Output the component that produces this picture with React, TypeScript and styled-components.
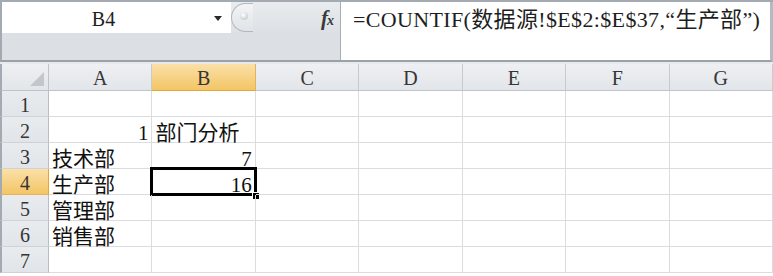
import styled, { createGlobalStyle } from "styled-components";

const GlobalStyle = createGlobalStyle`
  html, body {
    margin: 0;
    padding: 0;
    background: #ffffff;
  }
  body {
    width: 773px;
    height: 276px;
    overflow: hidden;
  }
`;

const Window = styled.div`
  width: 773px;
  height: 276px;
  overflow: hidden;
  box-sizing: border-box;
  border-top: 2px solid #a4aab1;
  background: #ffffff;
`;

const FormulaBar = styled.div`
  display: grid;
  grid-template-columns: 229px 109px 1fr;
  grid-template-rows: 31px 27px;
  border-left: 2px solid #a4aab1;
  border-right: 3px solid #b4bac1;
  border-bottom: 2px solid #9ba1a9;
`;

const NameBox = styled.div`
  grid-row: 1;
  grid-column: 1;
  display: flex;
  align-items: center;
  background: #ffffff;
`;

const NameText = styled.div`
  flex: 1;
  text-align: center;
  font-family: "Liberation Serif", serif;
  font-size: 20px;
  color: #1e1e1e;
  padding-top: 3px;
`;

const DropArrow = styled.div`
  width: 26px;
  display: flex;
  justify-content: center;
  padding-top: 2px;

  &::after {
    content: "";
    border-left: 4px solid transparent;
    border-right: 4px solid transparent;
    border-top: 5px solid #2a2a2a;
  }
`;

const Splitter = styled.div`
  grid-row: 1;
  grid-column: 2;
  display: flex;
  align-items: center;
  justify-content: space-between;
  background: linear-gradient(#e9ecef, #dde0e4);
`;

const Pill = styled.div`
  width: 22px;
  height: 29px;
  box-sizing: border-box;
  border: 1px solid #b3b8bf;
  border-right: none;
  border-radius: 15px 0 0 15px;
  background: linear-gradient(#f2f4f6, #e0e3e7);
  display: flex;
  align-items: center;
  padding-left: 8px;
`;

const Grip = styled.div`
  width: 8px;
  height: 8px;
  border-radius: 50%;
  background: radial-gradient(circle at 40% 35%, #ffffff, #b7bcc2);
  margin-top: -4px;
`;

const Fx = styled.div`
  font-family: "Liberation Serif", serif;
  font-style: italic;
  font-weight: bold;
  font-size: 21px;
  letter-spacing: -1px;
  color: #3a3a3a;
  padding-right: 7px;
  padding-top: 1px;

  & span {
    font-size: 14px;
  }
`;

const BarFill = styled.div`
  grid-row: 2;
  grid-column: 1 / span 2;
  background: #dcdfe3;
`;

const FormulaField = styled.div`
  grid-row: 1 / span 2;
  grid-column: 3;
  background: #ffffff;
  border-left: 1px solid #a8aeb5;
  padding: 6px 0 0 12px;
  font-family: "Liberation Serif", "Noto Sans CJK SC", serif;
  font-size: 22px;
  line-height: 24px;
  letter-spacing: 0.35px;
  color: #1e1e1e;
  white-space: nowrap;
`;

const Gap = styled.div`
  height: 2px;
  background: #e8ebee;
`;

const Sheet = styled.div`
  display: grid;
  grid-template-columns: 49px repeat(7, 103.43px);
  grid-template-rows: 27px;
  grid-auto-rows: 26px;
`;

const Corner = styled.div`
  box-sizing: border-box;
  background: linear-gradient(#eef0f3, #e2e5e9);
  border-left: 2px solid #a4aab1;
  border-right: 1px solid #bfc4ca;
  border-bottom: 1px solid #bfc4ca;
  display: flex;
  align-items: flex-end;
  justify-content: flex-end;
  padding: 0 4px 4px 0;
`;

const ColHead = styled.div<{ $active?: boolean }>`
  box-sizing: border-box;
  display: flex;
  align-items: center;
  justify-content: center;
  font-family: "Liberation Serif", serif;
  font-size: 20px;
  color: #353535;
  padding-top: 2px;
  background: ${(p) =>
    p.$active
      ? "linear-gradient(#fbe0a8, #f3c565)"
      : "linear-gradient(#eef0f3, #e2e5e9)"};
  border-right: 1px solid ${(p) => (p.$active ? "#e4b25a" : "#c6cbd1")};
  border-bottom: 1px solid ${(p) => (p.$active ? "#e3a53c" : "#bfc4ca")};
`;

const RowHead = styled.div<{ $active?: boolean }>`
  box-sizing: border-box;
  display: flex;
  align-items: center;
  justify-content: center;
  font-family: "Liberation Serif", serif;
  font-size: 20px;
  color: #353535;
  padding-top: 3px;
  background: ${(p) =>
    p.$active
      ? "linear-gradient(#fbe0a8, #f3c565)"
      : "linear-gradient(#e9ecef, #e1e4e8)"};
  border-left: 2px solid #a4aab1;
  border-right: 1px solid ${(p) => (p.$active ? "#e3a53c" : "#b9bec5")};
  border-bottom: 1px solid ${(p) => (p.$active ? "#e4b25a" : "#cfd3d8")};
`;

const Cell = styled.div<{ $align?: "left" | "right" }>`
  position: relative;
  box-sizing: border-box;
  display: flex;
  align-items: flex-end;
  justify-content: ${(p) => (p.$align === "right" ? "flex-end" : "flex-start")};
  padding: 0 3px 0 3px;
  border-right: 1px solid #dadcdf;
  border-bottom: 1px solid #dadcdf;
  font-family: "Liberation Serif", "Noto Sans CJK SC", serif;
  font-size: 21px;
  line-height: 18px;
  color: #111111;
  white-space: nowrap;
`;

const Selection = styled.div`
  position: absolute;
  top: -2px;
  left: -2px;
  right: -2px;
  bottom: -2px;
  border: 3px solid #000000;
  pointer-events: none;
`;

const FillHandle = styled.div`
  position: absolute;
  right: -4px;
  bottom: -5px;
  width: 6px;
  height: 6px;
  background: #000000;
  border-left: 1px solid #ffffff;
  border-top: 1px solid #ffffff;
`;

type CellData = { text?: string; align?: "left" | "right"; selected?: boolean };

const columns = ["A", "B", "C", "D", "E", "F", "G"];
const activeCol = 1;
const activeRow = 4;

const rows: CellData[][] = [
  [],
  [{ text: "1", align: "right" }, { text: "部门分析" }],
  [{ text: "技术部" }, { text: "7", align: "right" }],
  [{ text: "生产部" }, { text: "16", align: "right", selected: true }],
  [{ text: "管理部" }],
  [{ text: "销售部" }],
  [],
];

function CornerMark() {
  return (
    <svg width="14" height="14" viewBox="0 0 14 14">
      <polygon points="14,0 14,14 0,14" fill="#c3c7cc" />
    </svg>
  );
}

export default function App() {
  return (
    <>
      <GlobalStyle />
      <Window>
        <FormulaBar>
          <NameBox>
            <NameText>B4</NameText>
            <DropArrow />
          </NameBox>
          <Splitter>
            <Pill>
              <Grip />
            </Pill>
            <Fx>
              f<span>x</span>
            </Fx>
          </Splitter>
          <BarFill />
          <FormulaField>=COUNTIF(数据源!$E$2:$E$37,“生产部”)</FormulaField>
        </FormulaBar>
        <Gap />
        <Sheet>
          <Corner>
            <CornerMark />
          </Corner>
          {columns.map((c, i) => (
            <ColHead key={c} $active={i === activeCol}>
              {c}
            </ColHead>
          ))}
          {rows.map((row, r) => (
            <>
              <RowHead key={`h${r}`} $active={r + 1 === activeRow}>
                {r + 1}
              </RowHead>
              {columns.map((c, i) => {
                const cell = row[i];
                return (
                  <Cell key={`${c}${r}`} $align={cell?.align}>
                    {cell?.text}
                    {cell?.selected && (
                      <>
                        <Selection />
                        <FillHandle />
                      </>
                    )}
                  </Cell>
                );
              })}
            </>
          ))}
        </Sheet>
      </Window>
    </>
  );
}
